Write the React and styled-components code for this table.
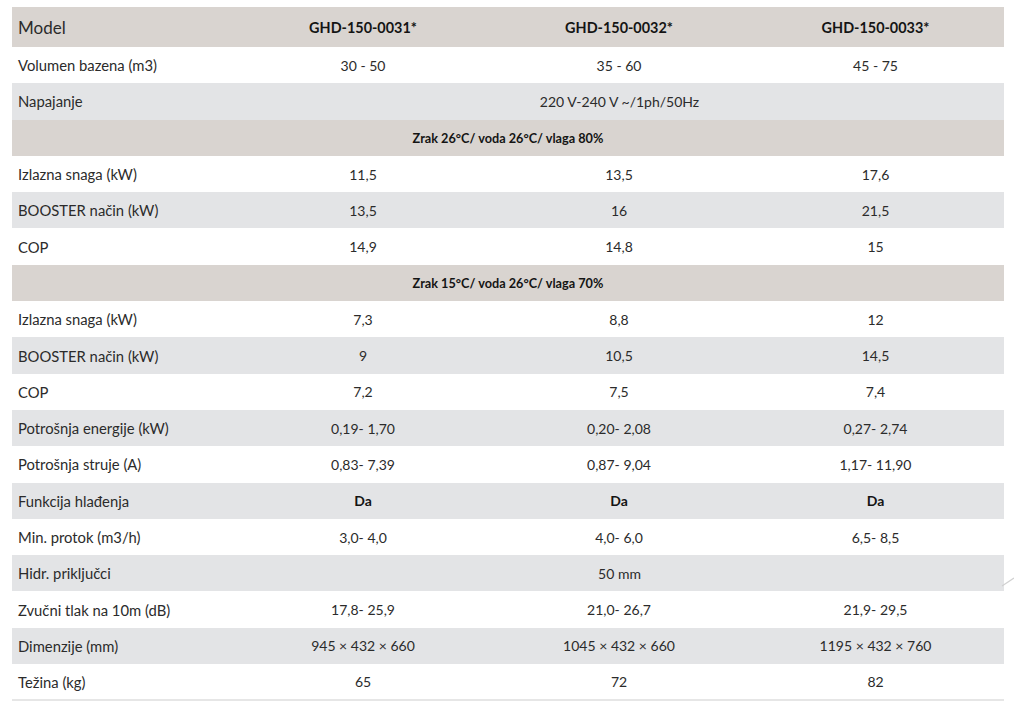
import React from "react";
import styled, { createGlobalStyle } from "styled-components";

const GlobalStyle = createGlobalStyle`
  body {
    margin: 0;
    background: #fff;
    font-family: Lato, "Open Sans", sans-serif;
    color: #2b2b2b;
  }
`;

const models = ["GHD-150-0031*", "GHD-150-0032*", "GHD-150-0033*"];

const rows = [
  { label: "Volumen bazena (m3)", values: ["30 - 50", "35 - 60", "45 - 75"] },
  { label: "Napajanje", span: "220 V-240 V ~/1ph/50Hz" },
  { section: "Zrak 26°C/ voda 26°C/ vlaga 80%" },
  { label: "Izlazna snaga (kW)", values: ["11,5", "13,5", "17,6"] },
  { label: "BOOSTER način (kW)", values: ["13,5", "16", "21,5"] },
  { label: "COP", values: ["14,9", "14,8", "15"] },
  { section: "Zrak 15°C/ voda 26°C/ vlaga 70%" },
  { label: "Izlazna snaga (kW)", values: ["7,3", "8,8", "12"] },
  { label: "BOOSTER način (kW)", values: ["9", "10,5", "14,5"] },
  { label: "COP", values: ["7,2", "7,5", "7,4"] },
  { label: "Potrošnja energije (kW)", values: ["0,19- 1,70", "0,20- 2,08", "0,27- 2,74"] },
  { label: "Potrošnja struje (A)", values: ["0,83- 7,39", "0,87- 9,04", "1,17- 11,90"] },
  { label: "Funkcija hlađenja", values: ["Da", "Da", "Da"], bold: true },
  { label: "Min. protok (m3/h)", values: ["3,0- 4,0", "4,0- 6,0", "6,5- 8,5"] },
  { label: "Hidr. priključci", span: "50 mm" },
  { label: "Zvučni tlak na 10m (dB)", values: ["17,8- 25,9", "21,0- 26,7", "21,9- 29,5"] },
  { label: "Dimenzije (mm)", values: ["945 × 432 × 660", "1045 × 432 × 660", "1195 × 432 × 760"] },
  { label: "Težina (kg)", values: ["65", "72", "82"] },
];

const Page = styled.div`
  position: relative;
  padding: 7px 10px 0 12px;
`;

const Table = styled.table`
  width: 992px;
  border-collapse: collapse;
  table-layout: fixed;
  border-bottom: 2px solid #e6e6e6;
`;

const HeadRow = styled.tr`
  height: 40px;
  background: #d9d4d0;
`;

const HeadLabel = styled.th`
  text-align: left;
  padding: 0 0 0 6px;
  font-size: 17px;
  font-weight: 400;
  color: #2b2b2b;
`;

const HeadModel = styled.th`
  text-align: center;
  font-size: 14.4px;
  font-weight: 700;
  color: #141414;
`;

const Row = styled.tr`
  height: 36.3px;
  background: ${(p) => (p.$tone === "warm" ? "#d9d4d0" : p.$tone === "gray" ? "#e3e4e6" : "#fff")};
`;

const Label = styled.td`
  padding: 0 0 0 6px;
  font-size: 14.8px;
  white-space: nowrap;
`;

const Value = styled.td`
  text-align: center;
  font-size: 14px;
  font-weight: ${(p) => (p.$bold ? 700 : 400)};
  color: ${(p) => (p.$bold ? "#141414" : "#2b2b2b")};
`;

const Section = styled.td`
  text-align: center;
  font-size: 12.7px;
  font-weight: 700;
  color: #141414;
`;

const Stroke = styled.svg`
  position: absolute;
  left: 1000px;
  top: 575px;
`;

export default function App() {
  let stripe = 0;
  return (
    <Page>
      <GlobalStyle />
      <Table>
        <colgroup>
          <col style={{ width: 223 }} />
          <col style={{ width: 256 }} />
          <col style={{ width: 256 }} />
          <col style={{ width: 257 }} />
        </colgroup>
        <thead>
          <HeadRow>
            <HeadLabel>Model</HeadLabel>
            {models.map((m) => (
              <HeadModel key={m}>{m}</HeadModel>
            ))}
          </HeadRow>
        </thead>
        <tbody>
          {rows.map((r, i) => {
            if (r.section) {
              stripe = 0;
              return (
                <Row key={i} $tone="warm">
                  <Section colSpan={4}>{r.section}</Section>
                </Row>
              );
            }
            const tone = stripe % 2 === 0 ? "white" : "gray";
            stripe++;
            return (
              <Row key={i} $tone={tone}>
                <Label>{r.label}</Label>
                {r.span ? (
                  <Value colSpan={3}>{r.span}</Value>
                ) : (
                  r.values.map((v, j) => (
                    <Value key={j} $bold={r.bold}>
                      {v}
                    </Value>
                  ))
                )}
              </Row>
            );
          })}
        </tbody>
      </Table>
      <Stroke width="14" height="14" viewBox="0 0 14 14">
        <path d="M2 11 L14 3" stroke="#d0d0d0" strokeWidth="1.2" fill="none" />
      </Stroke>
    </Page>
  );
}
